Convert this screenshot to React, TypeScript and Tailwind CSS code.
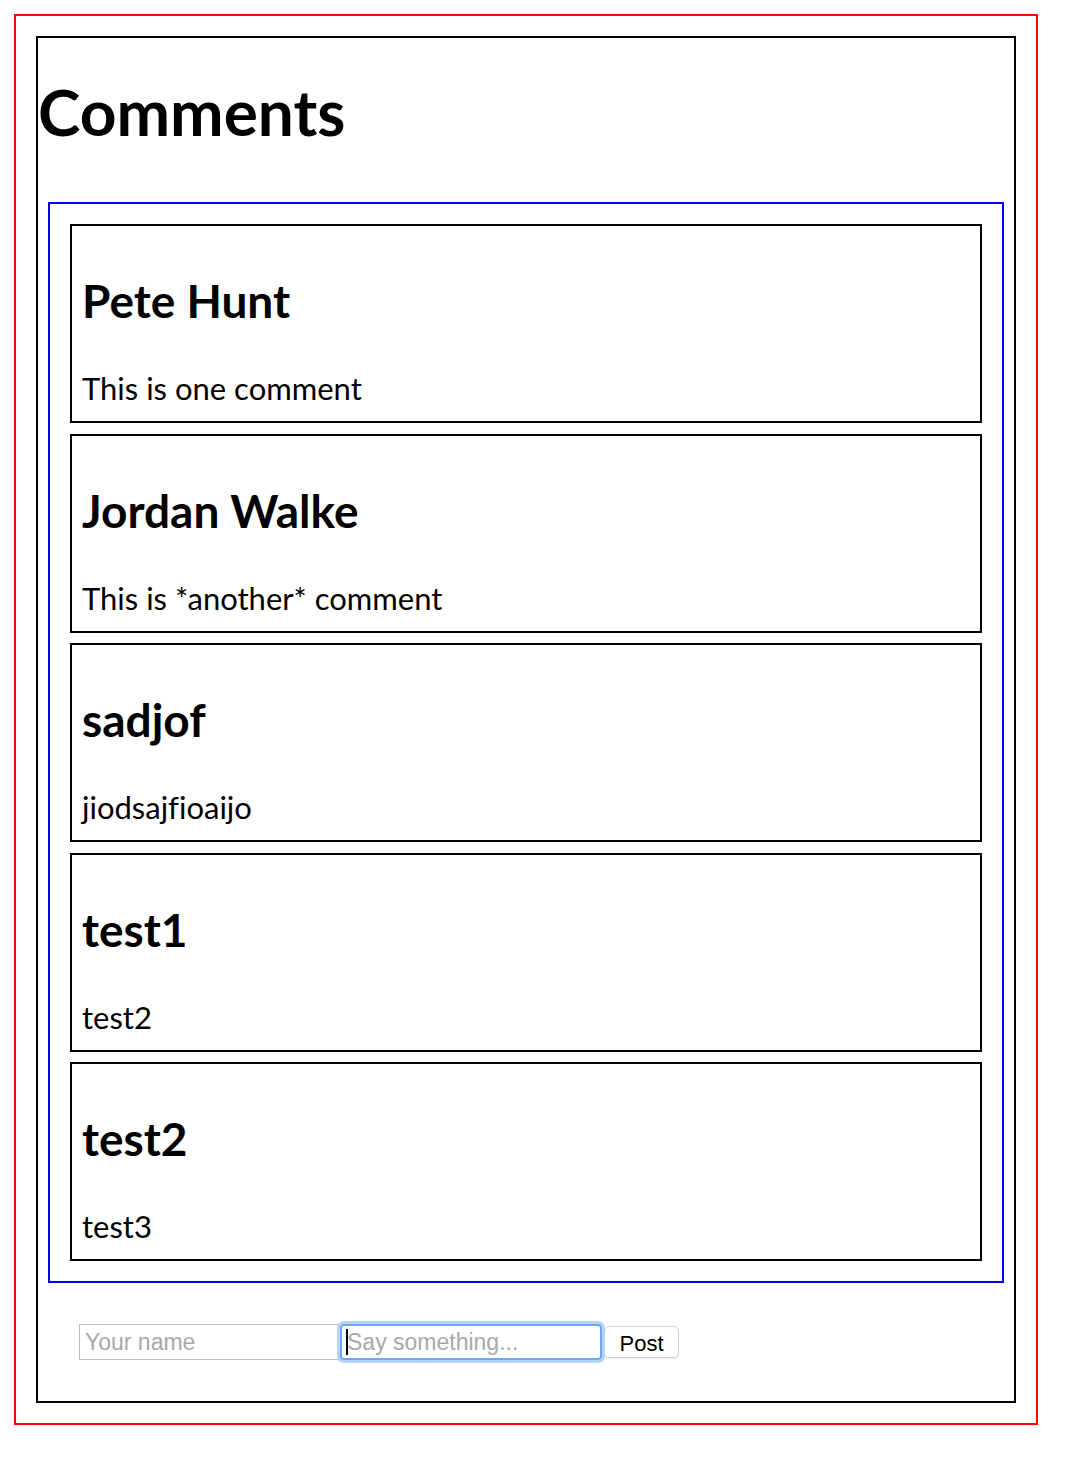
const comments = [
  { author: "Pete Hunt", text: "This is one comment" },
  { author: "Jordan Walke", text: "This is *another* comment" },
  { author: "sadjof", text: "jiodsajfioaijo" },
  { author: "test1", text: "test2" },
  { author: "test2", text: "test3" },
];

const font = { fontFamily: 'Lato, "Noto Sans", sans-serif' };

const Comment = ({ author, text }: { author: string; text: string }) => {
  return (
    <div className="flex h-[199px] flex-col border-2 border-black pl-[10px]">
      <h2 className="mt-[52px] text-[46px] font-bold leading-[46px] text-black">{author}</h2>
      <p className="mt-[49px] text-[31px] leading-[31px] text-black">{text}</p>
    </div>
  );
};

const CommentForm = () => {
  return (
    <form
      className="flex items-center pb-[41px] pl-[41px] pt-[41px]"
      style={{ fontFamily: '"Liberation Sans", Arial, sans-serif' }}
    >
      <input
        className="h-[36px] w-[261px] border border-[#bdbdbd] px-[5px] text-[23px] outline-none placeholder:text-[#a9a9a9]"
        placeholder="Your name"
      />
      <div className="relative">
        <input
          className="h-[36px] w-[262px] rounded-[4px] border-2 border-[#6fa6f3] px-[5px] text-[23px] shadow-[0_0_0_3px_#b3d3fb] outline-none placeholder:text-[#a9a9a9]"
          placeholder="Say something..."
        />
        <span className="absolute left-[6px] top-[5px] h-[26px] w-[2px] bg-black" />
      </div>
      <button
        type="button"
        className="ml-[2px] h-[32px] w-[75px] rounded-[5px] border border-[#cfcfcf] bg-white text-[22px] text-black shadow-[0_1px_1px_rgba(0,0,0,0.08)]"
      >
        Post
      </button>
    </form>
  );
};

export default function App() {
  return (
    <div className="bg-white p-[14px] [font-variant-ligatures:none]" style={font}>
      <div className="w-[1024px] border-2 border-[#ff0000] p-[20px]">
        <div className="flex flex-col border-2 border-black">
          <h1 className="mb-[58px] mt-[42px] text-[64px] font-bold leading-[64px] text-black">
            Comments
          </h1>
          <div className="mx-[10px] flex flex-col gap-[10.5px] border-2 border-[#0000ff] p-[20px]">
            {comments.map((c, idx) => (
              <Comment key={`comment-${idx}`} author={c.author} text={c.text} />
            ))}
          </div>
          <CommentForm />
        </div>
      </div>
    </div>
  );
}
